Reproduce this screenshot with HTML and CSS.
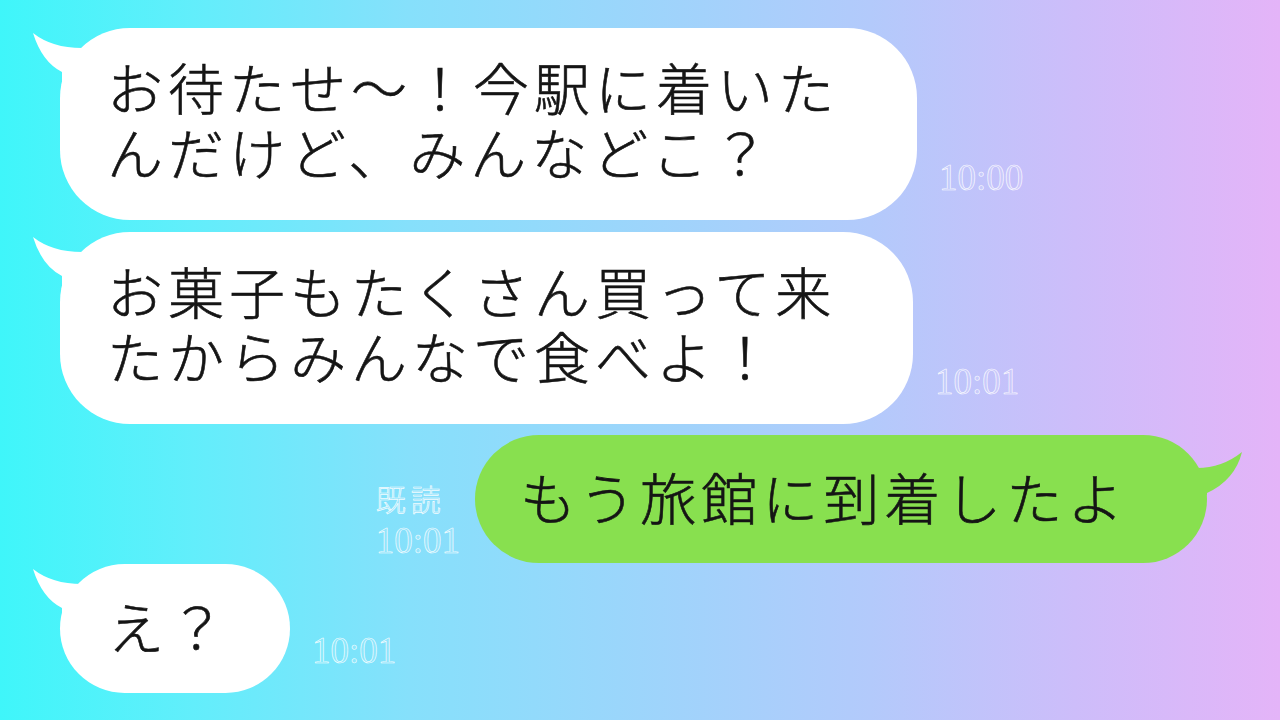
FILE: index.html
```html
<!DOCTYPE html>
<html lang="ja">
<head>
    <meta charset="UTF-8">
    <meta name="viewport" content="width=device-width, initial-scale=1.0">
    <title>トーク</title>
    <link rel="stylesheet" href="styles.css">
</head>
<body>

    <main class="chat">
        <!-- 相手のメッセージ -->
        <div class="row row-in">
            <div class="bubble bubble-in bubble-first">
                <svg class="tail tail-left" viewBox="0 0 60 60" width="60" height="60">
                    <path d="M3 5 Q22 20 52 20 L60 20 L60 60 L32 60 L32 44 Q12 34 3 5 Z"/>
                </svg>
                <p class="text">お待たせ〜！今駅に着いた<br>んだけど、みんなどこ？</p>
            </div>
            <span class="time">10:00</span>
        </div>

        <div class="row row-in row-second">
            <div class="bubble bubble-in bubble-second">
                <svg class="tail tail-left" viewBox="0 0 60 60" width="60" height="60">
                    <path d="M3 5 Q22 20 52 20 L60 20 L60 60 L32 60 L32 44 Q12 34 3 5 Z"/>
                </svg>
                <p class="text">お菓子もたくさん買って来<br>たからみんなで食べよ！</p>
            </div>
            <span class="time">10:01</span>
        </div>

        <!-- 自分のメッセージ -->
        <div class="row row-out">
            <div class="meta">
                <span class="read">既読</span>
                <span class="time time-out">10:01</span>
            </div>
            <div class="bubble bubble-out">
                <svg class="tail tail-right" viewBox="0 0 60 60" width="60" height="60">
                    <path d="M55 17 Q35 33 10 33 L0 33 L0 60 L20 60 L20 58 Q48 45 55 17 Z"/>
                </svg>
                <p class="text">もう旅館に到着したよ</p>
            </div>
        </div>

        <div class="row row-in row-last">
            <div class="bubble bubble-in bubble-short">
                <svg class="tail tail-left" viewBox="0 0 60 60" width="60" height="60">
                    <path d="M3 5 Q22 20 52 20 L60 20 L60 60 L32 60 L32 44 Q12 34 3 5 Z"/>
                </svg>
                <p class="text">え？</p>
            </div>
            <span class="time">10:01</span>
        </div>
    </main>

</body>
</html>
```

FILE: styles.css
```css
/* 基本 */
body {
    margin: 0;
    width: 1280px;
    height: 720px;
    overflow: hidden;
    font-family: "Noto Sans CJK JP", "Noto Sans", sans-serif;
    background: linear-gradient(to right, #3ff6fa 0%, #62eefb 15%, #86e0fb 32%, #b3cafb 68%, #cdbdfa 84%, #e4b4f8 100%);
}

.chat {
    display: flex;
    flex-direction: column;
    padding-top: 28px;
}

.row {
    display: flex;
    align-items: flex-end;
}

.row-in {
    padding-left: 60px;
}

.row-second {
    margin-top: 12px;
}

.row-out {
    justify-content: flex-end;
    padding-right: 73px;
    margin-top: 11px;
}

.row-last {
    margin-top: 1px;
}

/* 吹き出し */
.bubble {
    position: relative;
    box-sizing: border-box;
    border-radius: 70px;
    padding: 25px 0 37px 47px;
}

.bubble-in {
    background-color: #fff;
}

.bubble-in .tail path {
    fill: #fff;
}

.bubble-first {
    width: 857px;
}

.bubble-second {
    width: 853px;
}

.bubble-short {
    width: 230px;
    padding: 28px 0 36px 48px;
    border-radius: 65px;
}

.bubble-out {
    width: 732px;
    background-color: #88e04f;
    border-radius: 64px;
    padding: 28px 0 35px 45px;
}

.bubble-out .tail path {
    fill: #88e04f;
}

.tail {
    position: absolute;
    top: 0;
}

.tail-left {
    left: -30px;
}

.tail-right {
    right: -40px;
}

.text {
    position: relative;
    margin: 0;
    font-size: 56px;
    font-weight: 300;
    letter-spacing: 5px;
    line-height: 65px;
    color: #151515;
    -webkit-text-stroke: 0.6px #151515;
    white-space: nowrap;
}

/* 時刻と既読 */
.time {
    font-family: "Liberation Serif", serif;
    font-size: 37px;
    line-height: 1;
    color: rgba(255, 255, 255, 0.12);
    -webkit-text-stroke: 0.7px rgba(255, 255, 255, 0.9);
    margin-left: 22px;
    margin-bottom: 24px;
}

.meta {
    display: flex;
    flex-direction: column;
    align-items: flex-start;
    margin-right: 15px;
    margin-bottom: 4px;
}

.read {
    font-size: 30px;
    font-weight: 300;
    line-height: 1;
    letter-spacing: 5px;
    color: rgba(255, 255, 255, 0.12);
    -webkit-text-stroke: 0.7px rgba(255, 255, 255, 0.9);
    margin-bottom: 9px;
}

.time-out {
    margin: 0;
}
```
